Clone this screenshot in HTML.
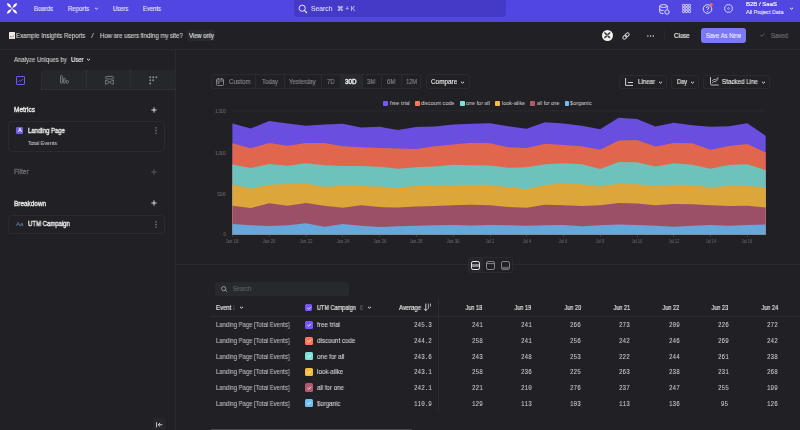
<!DOCTYPE html>
<html><head><meta charset="utf-8">
<style>
*{box-sizing:border-box;margin:0;padding:0}
html,body{width:800px;height:430px;overflow:hidden;background:#212125;font-family:"Liberation Sans",sans-serif}
.a{position:absolute;white-space:nowrap}
span.a{will-change:transform}
svg.a{overflow:visible}
</style></head><body>
<div class="a" style="left:0px;top:0px;width:800px;height:21.5px;background:#5146e1;"></div>
<svg class="a" style="left:6px;top:3px" width="12" height="11" viewBox="0 0 12 11"><g fill="#fff"><path d="M0.9,0.3 Q4.6,0.5 5.6,4.9 Q1.2,4.0 0.9,0.3 Z"/><path d="M11.1,0.3 Q7.4,0.5 6.4,4.9 Q10.8,4.0 11.1,0.3 Z"/><path d="M0.9,10.7 Q4.6,10.5 5.6,6.1 Q1.2,7.0 0.9,10.7 Z"/><path d="M11.1,10.7 Q7.4,10.5 6.4,6.1 Q10.8,7.0 11.1,10.7 Z"/><circle cx="6" cy="5.5" r="0.7"/></g></svg>
<span class="a" style="left:33.60px;top:4.86px;font-size:6.4px;line-height:7.68px;color:#e6e4ff;font-weight:normal;font-family:'Liberation Sans',sans-serif;transform:scale(0.943,1.000);transform-origin:left center;-webkit-text-stroke:0.12px #e6e4ff;">Boards</span>
<span class="a" style="left:67.60px;top:4.86px;font-size:6.4px;line-height:7.68px;color:#e6e4ff;font-weight:normal;font-family:'Liberation Sans',sans-serif;transform:scale(0.947,1.000);transform-origin:left center;-webkit-text-stroke:0.12px #e6e4ff;">Reports</span>
<span class="a" style="left:113.30px;top:4.86px;font-size:6.4px;line-height:7.68px;color:#e6e4ff;font-weight:normal;font-family:'Liberation Sans',sans-serif;transform:scale(0.916,1.000);transform-origin:left center;-webkit-text-stroke:0.12px #e6e4ff;">Users</span>
<span class="a" style="left:142.80px;top:4.86px;font-size:6.4px;line-height:7.68px;color:#e6e4ff;font-weight:normal;font-family:'Liberation Sans',sans-serif;transform:scale(0.926,1.000);transform-origin:left center;-webkit-text-stroke:0.12px #e6e4ff;">Events</span>
<svg class="a" style="left:94.3px;top:7.1px" width="5" height="3" viewBox="0 0 5 3"><path d="M1.0 0.8 L2.5 2.2 L4.0 0.8" stroke="#e6e4ff" stroke-width="1.0" fill="none"/></svg>
<div class="a" style="left:293.5px;top:0px;width:212px;height:17px;background:#4539c8;border-radius:0 0 4px 4px;"></div>
<svg class="a" style="left:297.5px;top:3.5px" width="10" height="10" viewBox="0 0 10 10"><circle cx="4.2" cy="4.2" r="3.1" stroke="#e6e4ff" stroke-width="1" fill="none"/><path d="M6.5 6.5 L9 9" stroke="#e6e4ff" stroke-width="1.1"/></svg>
<span class="a" style="left:311.00px;top:4.52px;font-size:6.8px;line-height:8.16px;color:#dcd9ff;font-weight:normal;font-family:'Liberation Sans',sans-serif;transform:scale(0.998,1.000);transform-origin:left center;-webkit-text-stroke:0.1px #dcd9ff;">Search</span>
<span class="a" style="left:337.00px;top:4.52px;font-size:6.8px;line-height:8.16px;color:#dcd9ff;font-weight:normal;font-family:'Liberation Sans',sans-serif;transform:scale(0.934,1.000);transform-origin:left center;-webkit-text-stroke:0.1px #dcd9ff;">&#8984; + K</span>
<svg class="a" style="left:659px;top:4px" width="11" height="11" viewBox="0 0 11 11"><ellipse cx="4.5" cy="2" rx="3.8" ry="1.4" stroke="#eeeaff" stroke-width="0.9" fill="none"/><path d="M0.7 2 V8 C0.7 9 2.4 9.5 4.5 9.5 M8.3 2 V5 M0.7 5 C0.7 6 2.4 6.5 4.5 6.5" stroke="#eeeaff" stroke-width="0.9" fill="none"/><circle cx="8" cy="8" r="2.2" stroke="#eeeaff" stroke-width="0.9" fill="none"/></svg>
<svg class="a" style="left:681.6px;top:4.4px" width="8.5" height="8.5" viewBox="0 0 8.5 8.5"><rect x="0.4" y="0.4" width="2.2" height="2.2" rx="0.6" fill="none" stroke="#eeeaff" stroke-width="0.75"/><rect x="0.4" y="3.4" width="2.2" height="2.2" rx="0.6" fill="none" stroke="#eeeaff" stroke-width="0.75"/><rect x="0.4" y="6.4" width="2.2" height="2.2" rx="0.6" fill="none" stroke="#eeeaff" stroke-width="0.75"/><rect x="3.4" y="0.4" width="2.2" height="2.2" rx="0.6" fill="none" stroke="#eeeaff" stroke-width="0.75"/><rect x="3.4" y="3.4" width="2.2" height="2.2" rx="0.6" fill="none" stroke="#eeeaff" stroke-width="0.75"/><rect x="3.4" y="6.4" width="2.2" height="2.2" rx="0.6" fill="none" stroke="#eeeaff" stroke-width="0.75"/><rect x="6.4" y="0.4" width="2.2" height="2.2" rx="0.6" fill="none" stroke="#eeeaff" stroke-width="0.75"/><rect x="6.4" y="3.4" width="2.2" height="2.2" rx="0.6" fill="none" stroke="#eeeaff" stroke-width="0.75"/><rect x="6.4" y="6.4" width="2.2" height="2.2" rx="0.6" fill="none" stroke="#eeeaff" stroke-width="0.75"/></svg>
<svg class="a" style="left:701.5px;top:2px" width="12" height="12" viewBox="0 0 12 12"><circle cx="5.5" cy="7" r="4.3" stroke="#eeeaff" stroke-width="0.9" fill="none"/><path d="M4.2 5.9 C4.2 4.2 6.9 4.2 6.9 5.9 C6.9 6.9 5.5 7 5.5 8" stroke="#eeeaff" stroke-width="0.9" fill="none"/><circle cx="5.5" cy="9.4" r="0.5" fill="#eeeaff"/><circle cx="9.2" cy="2.6" r="1.6" fill="#f06a4a"/></svg>
<svg class="a" style="left:724px;top:4.3px" width="9" height="9" viewBox="0 0 9 9"><path d="M4.50,0.80 Q6.38,-0.03 7.12,1.88 Q9.03,2.62 8.20,4.50 Q9.03,6.38 7.12,7.12 Q6.38,9.03 4.50,8.20 Q2.62,9.03 1.88,7.12 Q-0.03,6.38 0.80,4.50 Q-0.03,2.62 1.88,1.88 Q2.62,-0.03 4.50,0.80 Z" stroke="#eeeaff" stroke-width="0.85" fill="none" stroke-linejoin="round"/><circle cx="4.5" cy="4.5" r="0.9" stroke="#eeeaff" stroke-width="0.6" fill="none"/></svg>
<span class="a" style="left:746.00px;top:0.90px;font-size:6.0px;line-height:7.20px;color:#f2f0ff;font-weight:normal;font-family:'Liberation Sans',sans-serif;transform:scale(0.999,1.000);transform-origin:left center;-webkit-text-stroke:0.2px #f2f0ff;">B2B / SaaS</span>
<span class="a" style="left:746.00px;top:9.14px;font-size:5.6px;line-height:6.72px;color:#e6e4ff;font-weight:normal;font-family:'Liberation Sans',sans-serif;transform:scale(0.975,1.000);transform-origin:left center;-webkit-text-stroke:0.15px #e6e4ff;">All Project Data</span>
<svg class="a" style="left:788.8px;top:7.0px" width="5" height="3" viewBox="0 0 5 3"><path d="M1.0 0.8 L2.5 2.2 L4.0 0.8" stroke="#fff" stroke-width="1.0" fill="none"/></svg>
<div class="a" style="left:0px;top:49px;width:800px;height:0.8px;background:#2a2b2f;"></div>
<svg class="a" style="left:8.9px;top:31.7px" width="6" height="7" viewBox="0 0 6 7"><rect x="0" y="0" width="6" height="7" rx="0.5" fill="#ececec"/><path d="M0.8 4.8 L2.4 4.4 L3.6 4.7 L5.3 3.2" stroke="#c8703f" stroke-width="0.9" fill="none"/><path d="M0.7 6.2 H5.3" stroke="#a0a0a0" stroke-width="0.4"/></svg>
<span class="a" style="left:16.40px;top:31.72px;font-size:6.3px;line-height:7.56px;color:#d6d6d8;font-weight:normal;font-family:'Liberation Sans',sans-serif;transform:scale(0.966,1.000);transform-origin:left center;-webkit-text-stroke:0.1px #d6d6d8;">Example Insights Reports</span>
<span class="a" style="left:91.40px;top:31.72px;font-size:6.3px;line-height:7.56px;color:#b0b0b4;font-weight:normal;font-family:'Liberation Sans',sans-serif;transform:scale(1.657,1.000);transform-origin:left center;">/</span>
<span class="a" style="left:99.80px;top:31.72px;font-size:6.3px;line-height:7.56px;color:#d6d6d8;font-weight:normal;font-family:'Liberation Sans',sans-serif;transform:scale(0.962,1.000);transform-origin:left center;-webkit-text-stroke:0.1px #d6d6d8;">How are users finding my site?</span>
<div class="a" style="left:186.5px;top:30.3px;width:28.6px;height:10.6px;background:#28292d;border-radius:2px;"></div>
<span class="a" style="left:188.50px;top:31.72px;font-size:6.3px;line-height:7.56px;color:#e6e6e8;font-weight:normal;font-family:'Liberation Sans',sans-serif;transform:scale(0.931,1.000);transform-origin:left center;-webkit-text-stroke:0.1px #e6e6e8;">View only</span>
<div class="a" style="left:601.9px;top:29.8px;width:11.3px;height:11.3px;background:#f2f2f2;border-radius:6px;"></div>
<svg class="a" style="left:604.3px;top:32.1px" width="6.5" height="6.5" viewBox="0 0 12 11"><g fill="#2a2a2e" stroke="#2a2a2e" stroke-width="0.9" stroke-linejoin="round"><path d="M0.6,0.2 Q5,0.4 5.7,4.9 Q1,4.2 0.6,0.2 Z"/><path d="M11.4,0.2 Q7,0.4 6.3,4.9 Q11,4.2 11.4,0.2 Z"/><path d="M0.6,10.8 Q5,10.6 5.7,6.1 Q1,6.8 0.6,10.8 Z"/><path d="M11.4,10.8 Q7,10.6 6.3,6.1 Q11,6.8 11.4,10.8 Z"/></g></svg>
<svg class="a" style="left:621.5px;top:31.5px" width="8" height="8" viewBox="0 0 8 8"><g transform="rotate(-45 4 4)" stroke="#d8d8da" stroke-width="1" fill="none"><rect x="0.1" y="2.5" width="4.6" height="3" rx="1.5"/><rect x="3.3" y="2.5" width="4.6" height="3" rx="1.5"/></g></svg>
<svg class="a" style="left:646.5px;top:34.6px" width="7.5" height="2" viewBox="0 0 7.5 2"><circle cx="0.9" cy="1" r="0.65" fill="#f0f0f2"/><circle cx="3.6" cy="1" r="0.65" fill="#f0f0f2"/><circle cx="6.3" cy="1" r="0.65" fill="#f0f0f2"/></svg>
<div class="a" style="left:663.6px;top:30px;width:0.6px;height:10.5px;background:#28292d;"></div>
<span class="a" style="left:674.00px;top:31.60px;font-size:6.5px;line-height:7.80px;color:#ececee;font-weight:normal;font-family:'Liberation Sans',sans-serif;transform:scale(0.944,1.000);transform-origin:left center;-webkit-text-stroke:0.18px #ececee;">Close</span>
<div class="a" style="left:700.8px;top:28.1px;width:45.4px;height:14.5px;background:#7d78f6;border-radius:3px;"></div>
<span class="a" style="left:706.00px;top:31.66px;font-size:6.4px;line-height:7.68px;color:#eeeeff;font-weight:normal;font-family:'Liberation Sans',sans-serif;transform:scale(0.921,1.000);transform-origin:left center;-webkit-text-stroke:0.12px #eeeeff;">Save As New</span>
<svg class="a" style="left:760px;top:33.3px" width="5" height="4" viewBox="0 0 5 4"><path d="M0.5 2 L1.8 3.3 L4.5 0.6" stroke="#6f6f73" stroke-width="0.8" fill="none"/></svg>
<span class="a" style="left:771.00px;top:31.72px;font-size:6.3px;line-height:7.56px;color:#6c6c70;font-weight:normal;font-family:'Liberation Sans',sans-serif;transform:scale(0.952,1.000);transform-origin:left center;-webkit-text-stroke:0.2px #6c6c70;">Saved</span>
<div class="a" style="left:175.2px;top:50px;width:0.8px;height:380px;background:#2a2b2f;"></div>
<span class="a" style="left:14.25px;top:55.70px;font-size:6.5px;line-height:7.80px;color:#d0d0d2;font-weight:normal;font-family:'Liberation Sans',sans-serif;transform:scale(0.918,1.000);transform-origin:left center;-webkit-text-stroke:0.1px #d0d0d2;">Analyze Uniques by</span>
<span class="a" style="left:70.75px;top:55.70px;font-size:6.5px;line-height:7.80px;color:#efeff1;font-weight:normal;font-family:'Liberation Sans',sans-serif;transform:scale(0.910,1.000);transform-origin:left center;-webkit-text-stroke:0.15px #efeff1;">User</span>
<svg class="a" style="left:85.7px;top:58.3px" width="5" height="3" viewBox="0 0 5 3"><path d="M1.0 0.8 L2.5 2.2 L4.0 0.8" stroke="#e4e4e6" stroke-width="1.0" fill="none"/></svg>
<div class="a" style="left:41.25px;top:70px;width:134px;height:19.5px;background:#26272b;border-left:1px dotted #36373b;border-bottom:1px dotted #36373b;border-top-left-radius:3px;"></div>
<div class="a" style="left:86.25px;top:70px;width:1px;height:19.5px;border-left:1px dotted #36373b;"></div>
<div class="a" style="left:130px;top:70px;width:1px;height:19.5px;border-left:1px dotted #36373b;"></div>
<svg class="a" style="left:15.5px;top:75.5px" width="9" height="9" viewBox="0 0 9 9"><rect x="0.5" y="0.5" width="8" height="8" rx="0.6" stroke="#6f5ff0" stroke-width="1" fill="none"/><path d="M2 6 L3.6 4.4 L4.8 5.2 L7 3" stroke="#6f5ff0" stroke-width="0.8" fill="none"/></svg>
<svg class="a" style="left:59.8px;top:75.3px" width="9" height="9" viewBox="0 0 9 9"><g stroke="#8a8a8e" stroke-width="0.8" fill="none"><rect x="0.5" y="0.5" width="1.8" height="7.8" rx="0.9"/><rect x="3.4" y="3.2" width="1.8" height="5.1" rx="0.9"/><rect x="6.3" y="5.4" width="2.1" height="2.9" rx="1"/></g></svg>
<svg class="a" style="left:104.6px;top:75.5px" width="9" height="9" viewBox="0 0 9 9"><g stroke="#8a8a8e" stroke-width="0.8" fill="none"><rect x="0.5" y="0.4" width="8" height="2.6" rx="1.3"/><path d="M0.6 4.2 C3 4.2 6 8.3 8.4 8.3 M8.4 4.2 C6 4.2 3 8.3 0.6 8.3 M0.6 4.2 V8.3 M8.4 4.2 V8.3"/></g></svg>
<svg class="a" style="left:148.75px;top:75.5px" width="9" height="9" viewBox="0 0 9 9"><g fill="#8a8a8e"><circle cx="1.2" cy="1.2" r="1.0"/><circle cx="4.2" cy="1.2" r="1.0"/><circle cx="7.3" cy="1.2" r="1.0"/><circle cx="1.2" cy="4.3" r="1.0"/><circle cx="4.2" cy="4.3" r="1.0"/><circle cx="1.2" cy="7.4" r="1.0"/></g></svg>
<span class="a" style="left:14.00px;top:105.92px;font-size:6.3px;line-height:7.56px;color:#ececee;font-weight:normal;font-family:'Liberation Sans',sans-serif;transform:scale(1.035,1.000);transform-origin:left center;-webkit-text-stroke:0.3px #ececee;">Metrics</span>
<svg class="a" style="left:151px;top:106.7px" width="6" height="6" viewBox="0 0 6 6"><path d="M3 0.4 V5.6 M0.4 3 H5.6" stroke="#dcdcde" stroke-width="1"/></svg>
<div class="a" style="left:8.3px;top:120.7px;width:156.7px;height:31.5px;border:1px solid #2a2b2f;border-radius:4px;"></div>
<div class="a" style="left:16.2px;top:126.9px;width:7px;height:7px;background:#6c5ce9;border-radius:1px;"></div>
<span class="a" style="left:19.70px;top:127.26px;font-size:5.4px;line-height:6.48px;color:#fff;font-weight:bold;font-family:'Liberation Sans',sans-serif;transform:translateX(-50%);transform-origin:center center;">A</span>
<span class="a" style="left:28.00px;top:126.62px;font-size:6.3px;line-height:7.56px;color:#f0f0f2;font-weight:normal;font-family:'Liberation Sans',sans-serif;transform:scale(0.952,1.000);transform-origin:left center;-webkit-text-stroke:0.3px #f0f0f2;">Landing Page</span>
<svg class="a" style="left:154.7px;top:126.9px" width="2" height="7" viewBox="0 0 2 7"><g fill="#a0a0a4"><circle cx="1" cy="0.9" r="0.65"/><circle cx="1" cy="3.5" r="0.65"/><circle cx="1" cy="6.1" r="0.65"/></g></svg>
<span class="a" style="left:28.00px;top:139.70px;font-size:6.0px;line-height:7.20px;color:#c4c4c7;font-weight:normal;font-family:'Liberation Sans',sans-serif;transform:scale(0.887,1.000);transform-origin:left center;-webkit-text-stroke:0.08px #c4c4c7;">Total Events</span>
<span class="a" style="left:14.00px;top:167.92px;font-size:6.3px;line-height:7.56px;color:#6a6a6e;font-weight:normal;font-family:'Liberation Sans',sans-serif;transform:scale(1.057,1.000);transform-origin:left center;-webkit-text-stroke:0.3px #6a6a6e;">Filter</span>
<svg class="a" style="left:151px;top:168.7px" width="6" height="6" viewBox="0 0 6 6"><path d="M3 0.4 V5.6 M0.4 3 H5.6" stroke="#5a5a5e" stroke-width="1"/></svg>
<span class="a" style="left:14.00px;top:199.62px;font-size:6.3px;line-height:7.56px;color:#ececee;font-weight:normal;font-family:'Liberation Sans',sans-serif;transform:scale(1.019,1.000);transform-origin:left center;-webkit-text-stroke:0.3px #ececee;">Breakdown</span>
<svg class="a" style="left:151px;top:200.4px" width="6" height="6" viewBox="0 0 6 6"><path d="M3 0.4 V5.6 M0.4 3 H5.6" stroke="#dcdcde" stroke-width="1"/></svg>
<div class="a" style="left:8.3px;top:215.1px;width:156.7px;height:18.5px;border:1px solid #2a2b2f;border-radius:4px;"></div>
<span class="a" style="left:15.75px;top:220.62px;font-size:5.8px;line-height:6.96px;color:#6a8cb2;font-weight:normal;font-family:'Liberation Sans',sans-serif;transform:scale(1.050,1.000);transform-origin:left center;">Aa</span>
<span class="a" style="left:27.90px;top:220.32px;font-size:6.3px;line-height:7.56px;color:#f0f0f2;font-weight:normal;font-family:'Liberation Sans',sans-serif;transform:scale(0.949,1.000);transform-origin:left center;-webkit-text-stroke:0.3px #f0f0f2;">UTM Campaign</span>
<svg class="a" style="left:154.7px;top:220.6px" width="2" height="7" viewBox="0 0 2 7"><g fill="#a0a0a4"><circle cx="1" cy="0.9" r="0.65"/><circle cx="1" cy="3.5" r="0.65"/><circle cx="1" cy="6.1" r="0.65"/></g></svg>
<div class="a" style="left:153px;top:417.5px;width:12.6px;height:13px;background:#26272b;border-radius:3px;"></div>
<svg class="a" style="left:155.6px;top:422px" width="6.5" height="5.5" viewBox="0 0 6.5 5.5"><path d="M0.6 0.2 V5.3 M6.3 2.75 H2.2 M4.1 0.9 L2.2 2.75 L4.1 4.6" stroke="#dcdcde" stroke-width="0.9" fill="none"/></svg>
<div class="a" style="left:211px;top:74px;width:210px;height:15.2px;border:1px solid #2a2b2f;border-radius:3px;"></div>
<div class="a" style="left:255.3px;top:75px;width:0.8px;height:13.2px;background:#2a2b2f;"></div>
<div class="a" style="left:284.2px;top:75px;width:0.8px;height:13.2px;background:#2a2b2f;"></div>
<div class="a" style="left:320.5px;top:75px;width:0.8px;height:13.2px;background:#2a2b2f;"></div>
<div class="a" style="left:339.8px;top:75px;width:0.8px;height:13.2px;background:#2a2b2f;"></div>
<div class="a" style="left:361.8px;top:75px;width:0.8px;height:13.2px;background:#2a2b2f;"></div>
<div class="a" style="left:381px;top:75px;width:0.8px;height:13.2px;background:#2a2b2f;"></div>
<div class="a" style="left:401px;top:75px;width:0.8px;height:13.2px;background:#2a2b2f;"></div>
<div class="a" style="left:340.3px;top:75px;width:21.5px;height:13.2px;background:#28292d;"></div>
<svg class="a" style="left:215.5px;top:77.5px" width="8" height="8" viewBox="0 0 8 8"><rect x="0.5" y="1" width="7" height="6.5" rx="1" stroke="#9a9a9e" stroke-width="0.8" fill="none"/><path d="M0.5 3 H7.5 M2.3 0 V1.8 M5.7 0 V1.8" stroke="#9a9a9e" stroke-width="0.8"/><rect x="1.8" y="4.3" width="1.5" height="1.5" fill="#9a9a9e"/></svg>
<span class="a" style="left:229.00px;top:77.82px;font-size:6.3px;line-height:7.56px;color:#8a8a8e;font-weight:normal;font-family:'Liberation Sans',sans-serif;transform:scale(0.986,1.000);transform-origin:left center;-webkit-text-stroke:0.1px #8a8a8e;">Custom</span>
<span class="a" style="left:262.00px;top:77.82px;font-size:6.3px;line-height:7.56px;color:#8a8a8e;font-weight:normal;font-family:'Liberation Sans',sans-serif;transform:scale(0.946,1.000);transform-origin:left center;-webkit-text-stroke:0.1px #8a8a8e;">Today</span>
<span class="a" style="left:288.90px;top:77.82px;font-size:6.3px;line-height:7.56px;color:#8a8a8e;font-weight:normal;font-family:'Liberation Sans',sans-serif;transform:scale(0.968,1.000);transform-origin:left center;-webkit-text-stroke:0.1px #8a8a8e;">Yesterday</span>
<span class="a" style="left:326.80px;top:77.82px;font-size:6.3px;line-height:7.56px;color:#8a8a8e;font-weight:normal;font-family:'Liberation Sans',sans-serif;transform:scale(0.930,1.000);transform-origin:left center;-webkit-text-stroke:0.1px #8a8a8e;">7D</span>
<span class="a" style="left:344.70px;top:77.82px;font-size:6.3px;line-height:7.56px;color:#f2f2f4;font-weight:normal;font-family:'Liberation Sans',sans-serif;transform:scale(1.003,1.000);transform-origin:left center;-webkit-text-stroke:0.35px #f2f2f4;">30D</span>
<span class="a" style="left:367.30px;top:77.82px;font-size:6.3px;line-height:7.56px;color:#8a8a8e;font-weight:normal;font-family:'Liberation Sans',sans-serif;transform:scale(0.937,1.000);transform-origin:left center;-webkit-text-stroke:0.1px #8a8a8e;">3M</span>
<span class="a" style="left:386.50px;top:77.82px;font-size:6.3px;line-height:7.56px;color:#8a8a8e;font-weight:normal;font-family:'Liberation Sans',sans-serif;transform:scale(0.949,1.000);transform-origin:left center;-webkit-text-stroke:0.1px #8a8a8e;">6M</span>
<span class="a" style="left:405.80px;top:77.82px;font-size:6.3px;line-height:7.56px;color:#8a8a8e;font-weight:normal;font-family:'Liberation Sans',sans-serif;transform:scale(0.898,1.000);transform-origin:left center;-webkit-text-stroke:0.1px #8a8a8e;">12M</span>
<div class="a" style="left:425.5px;top:74px;width:44px;height:15.2px;border:1px solid #2a2b2f;border-radius:3px;"></div>
<span class="a" style="left:430.70px;top:77.82px;font-size:6.3px;line-height:7.56px;color:#efeff1;font-weight:normal;font-family:'Liberation Sans',sans-serif;transform:scale(1.015,1.000);transform-origin:left center;-webkit-text-stroke:0.1px #efeff1;">Compare</span>
<svg class="a" style="left:460px;top:80.5px" width="5" height="3" viewBox="0 0 5 3"><path d="M1.0 0.8 L2.5 2.2 L4.0 0.8" stroke="#e4e4e6" stroke-width="1.0" fill="none"/></svg>
<div class="a" style="left:619px;top:74.75px;width:48.4px;height:14px;border:1px solid #2a2b2f;border-radius:3px;"></div>
<svg class="a" style="left:624.5px;top:77.5px" width="8" height="8" viewBox="0 0 8 8"><path d="M0.6 0 V7.4 H8 M2.8 4.5 H8" stroke="#e4e4e6" stroke-width="0.9" fill="none"/></svg>
<span class="a" style="left:637.70px;top:77.82px;font-size:6.3px;line-height:7.56px;color:#efeff1;font-weight:normal;font-family:'Liberation Sans',sans-serif;transform:scale(0.965,1.000);transform-origin:left center;-webkit-text-stroke:0.1px #efeff1;">Linear</span>
<svg class="a" style="left:658px;top:80.5px" width="5" height="3" viewBox="0 0 5 3"><path d="M1.0 0.8 L2.5 2.2 L4.0 0.8" stroke="#e4e4e6" stroke-width="1.0" fill="none"/></svg>
<div class="a" style="left:671.4px;top:74.75px;width:27.5px;height:14px;border:1px solid #2a2b2f;border-radius:3px;"></div>
<span class="a" style="left:676.80px;top:77.82px;font-size:6.3px;line-height:7.56px;color:#efeff1;font-weight:normal;font-family:'Liberation Sans',sans-serif;transform:scale(0.910,1.000);transform-origin:left center;-webkit-text-stroke:0.1px #efeff1;">Day</span>
<svg class="a" style="left:689.8px;top:80.5px" width="5" height="3" viewBox="0 0 5 3"><path d="M1.0 0.8 L2.5 2.2 L4.0 0.8" stroke="#e4e4e6" stroke-width="1.0" fill="none"/></svg>
<div class="a" style="left:703.4px;top:74.75px;width:66.4px;height:14px;border:1px solid #2a2b2f;border-radius:3px;"></div>
<svg class="a" style="left:709.5px;top:77.4px" width="9" height="8.5" viewBox="0 0 9 8.5"><path d="M0.5 0 V6.8 Q0.5 8 1.7 8 H8.8" stroke="#d8d8da" stroke-width="0.85" fill="none"/><path d="M2.2 6 L4 4.2 L5.2 5 L8.4 2 M2.2 4 L4 2.2 L5.2 3 L8.4 0.4" stroke="#d8d8da" stroke-width="0.75" fill="none"/></svg>
<span class="a" style="left:722.00px;top:77.82px;font-size:6.3px;line-height:7.56px;color:#efeff1;font-weight:normal;font-family:'Liberation Sans',sans-serif;transform:scale(0.983,1.000);transform-origin:left center;-webkit-text-stroke:0.1px #efeff1;">Stacked Line</span>
<svg class="a" style="left:760.5px;top:80.5px" width="5" height="3" viewBox="0 0 5 3"><path d="M1.0 0.8 L2.5 2.2 L4.0 0.8" stroke="#e4e4e6" stroke-width="1.0" fill="none"/></svg>
<div class="a" style="left:383.4px;top:101px;width:4.5px;height:4.5px;background:#7856ff;border-radius:0.9px;"></div>
<span class="a" style="left:389.60px;top:99.76px;font-size:5.9px;line-height:7.08px;color:#c0c0c4;font-weight:normal;font-family:'Liberation Sans',sans-serif;transform:scale(0.926,1.000);transform-origin:left center;-webkit-text-stroke:0.05px #c0c0c4;">free trial</span>
<div class="a" style="left:415px;top:101px;width:4.5px;height:4.5px;background:#ff7557;border-radius:0.9px;"></div>
<span class="a" style="left:420.80px;top:99.76px;font-size:5.9px;line-height:7.08px;color:#c0c0c4;font-weight:normal;font-family:'Liberation Sans',sans-serif;transform:scale(0.921,1.000);transform-origin:left center;-webkit-text-stroke:0.05px #c0c0c4;">discount code</span>
<div class="a" style="left:460px;top:101px;width:4.5px;height:4.5px;background:#80e1d9;border-radius:0.9px;"></div>
<span class="a" style="left:466.40px;top:99.76px;font-size:5.9px;line-height:7.08px;color:#c0c0c4;font-weight:normal;font-family:'Liberation Sans',sans-serif;transform:scale(0.924,1.000);transform-origin:left center;-webkit-text-stroke:0.05px #c0c0c4;">one for all</span>
<div class="a" style="left:495.4px;top:101px;width:4.5px;height:4.5px;background:#f8bc3b;border-radius:0.9px;"></div>
<span class="a" style="left:501.50px;top:99.76px;font-size:5.9px;line-height:7.08px;color:#c0c0c4;font-weight:normal;font-family:'Liberation Sans',sans-serif;transform:scale(0.928,1.000);transform-origin:left center;-webkit-text-stroke:0.05px #c0c0c4;">look-alike</span>
<div class="a" style="left:530.2px;top:101px;width:4.5px;height:4.5px;background:#b2596e;border-radius:0.9px;"></div>
<span class="a" style="left:536.70px;top:99.76px;font-size:5.9px;line-height:7.08px;color:#c0c0c4;font-weight:normal;font-family:'Liberation Sans',sans-serif;transform:scale(0.870,1.000);transform-origin:left center;-webkit-text-stroke:0.05px #c0c0c4;">all for one</span>
<div class="a" style="left:564.8px;top:101px;width:4.5px;height:4.5px;background:#72bef4;border-radius:0.9px;"></div>
<span class="a" style="left:570.40px;top:99.76px;font-size:5.9px;line-height:7.08px;color:#c0c0c4;font-weight:normal;font-family:'Liberation Sans',sans-serif;transform:scale(0.960,1.000);transform-origin:left center;-webkit-text-stroke:0.05px #c0c0c4;">$organic</span>
<svg class="a" style="left:0;top:0" width="800" height="430" viewBox="0 0 800 430">
<path d="M232.4 110.9 H765.7" stroke="#2e2f33" stroke-width="0.6"/>
<polygon fill="#6a4edf" points="232.4,123.4 250.8,128.4 269.2,121.0 287.6,123.4 306.0,125.8 324.3,124.4 342.7,123.8 361.1,127.4 379.5,126.7 397.9,130.0 416.3,127.0 434.7,126.5 453.1,124.4 471.5,123.7 489.9,123.3 508.2,126.2 526.6,128.8 545.0,122.3 563.4,123.5 581.8,125.8 600.2,129.3 618.6,117.8 637.0,118.9 655.4,126.5 673.8,122.7 692.1,125.3 710.5,126.7 728.9,126.2 747.3,123.2 765.7,135.8 765.7,234.5 232.4,234.5"/>
<polygon fill="#e0674e" points="232.4,143.2 250.8,148.2 269.2,142.9 287.6,145.8 306.0,143.0 324.3,143.0 342.7,146.2 361.1,147.2 379.5,148.0 397.9,148.6 416.3,148.9 434.7,146.3 453.1,144.5 471.5,142.8 489.9,143.3 508.2,147.2 526.6,148.0 545.0,143.7 563.4,145.1 581.8,146.3 600.2,149.8 618.6,140.5 637.0,139.9 655.4,146.6 673.8,143.1 692.1,143.3 710.5,149.8 728.9,145.9 747.3,144.0 765.7,152.4 765.7,234.5 232.4,234.5"/>
<polygon fill="#6ec2bc" points="232.4,164.4 250.8,168.1 269.2,163.9 287.6,165.8 306.0,163.3 324.3,165.2 342.7,166.1 361.1,166.1 379.5,166.8 397.9,168.7 416.3,167.3 434.7,166.4 453.1,164.7 471.5,165.2 489.9,165.4 508.2,167.8 526.6,167.3 545.0,164.3 563.4,163.2 581.8,164.3 600.2,169.0 618.6,162.0 637.0,162.2 655.4,166.4 673.8,163.2 692.1,164.7 710.5,168.7 728.9,165.0 747.3,164.3 765.7,170.2 765.7,234.5 232.4,234.5"/>
<polygon fill="#dca63b" points="232.4,184.4 250.8,188.5 269.2,184.8 287.6,184.0 306.0,183.4 324.3,186.7 342.7,185.7 361.1,186.1 379.5,186.4 397.9,187.6 416.3,186.1 434.7,185.5 453.1,185.0 471.5,184.7 489.9,184.8 508.2,187.3 526.6,189.0 545.0,185.0 563.4,183.2 581.8,184.3 600.2,186.4 618.6,183.8 637.0,184.3 655.4,186.1 673.8,184.7 692.1,185.0 710.5,187.3 728.9,185.5 747.3,185.5 765.7,187.8 765.7,234.5 232.4,234.5"/>
<polygon fill="#9b5068" points="232.4,205.7 250.8,207.9 269.2,203.3 287.6,205.7 306.0,203.0 324.3,205.7 342.7,207.7 361.1,205.3 379.5,207.1 397.9,207.4 416.3,206.5 434.7,206.0 453.1,205.3 471.5,204.8 489.9,205.3 508.2,207.1 526.6,207.8 545.0,204.8 563.4,205.3 581.8,206.0 600.2,205.3 618.6,203.0 637.0,203.6 655.4,205.3 673.8,203.9 692.1,204.2 710.5,205.3 728.9,206.0 747.3,205.7 765.7,207.4 765.7,234.5 232.4,234.5"/>
<polygon fill="#68a7d9" points="232.4,223.9 250.8,225.2 269.2,226.0 287.6,225.2 306.0,223.3 324.3,226.7 342.7,224.1 361.1,225.8 379.5,227.0 397.9,226.3 416.3,225.8 434.7,225.2 453.1,224.9 471.5,225.4 489.9,224.9 508.2,225.2 526.6,225.8 545.0,225.2 563.4,224.9 581.8,226.3 600.2,225.2 618.6,224.6 637.0,224.9 655.4,225.8 673.8,226.7 692.1,225.8 710.5,224.9 728.9,225.8 747.3,224.9 765.7,224.6 765.7,234.5 232.4,234.5"/>

</svg>
<span class="a" style="right:574.60px;top:108.44px;font-size:5.1px;line-height:6.12px;color:#6a6a6e;font-weight:normal;font-family:'Liberation Sans',sans-serif;transform:scale(0.831,1.000);transform-origin:right center;-webkit-text-stroke:0.05px #6a6a6e;">1,500</span>
<span class="a" style="right:574.60px;top:149.54px;font-size:5.1px;line-height:6.12px;color:#6a6a6e;font-weight:normal;font-family:'Liberation Sans',sans-serif;transform:scale(0.831,1.000);transform-origin:right center;-webkit-text-stroke:0.05px #6a6a6e;">1,000</span>
<span class="a" style="right:574.60px;top:190.74px;font-size:5.1px;line-height:6.12px;color:#6a6a6e;font-weight:normal;font-family:'Liberation Sans',sans-serif;transform:scale(0.965,1.000);transform-origin:right center;-webkit-text-stroke:0.05px #6a6a6e;">500</span>
<span class="a" style="right:574.60px;top:230.94px;font-size:5.1px;line-height:6.12px;color:#6a6a6e;font-weight:normal;font-family:'Liberation Sans',sans-serif;transform:scale(0.844,1.000);transform-origin:right center;-webkit-text-stroke:0.05px #6a6a6e;">0</span>
<span class="a" style="left:232.40px;top:238.22px;font-size:5.3px;line-height:6.36px;color:#6a6a6e;font-weight:normal;font-family:'Liberation Sans',sans-serif;transform:translateX(-50%) scale(0.786,1.000);transform-origin:center center;-webkit-text-stroke:0.05px #6a6a6e;">Jun 18</span>
<div class="a" style="left:232.1px;top:235px;width:0.6px;height:1.8px;background:#3a3b3f;"></div>
<span class="a" style="left:269.18px;top:238.22px;font-size:5.3px;line-height:6.36px;color:#6a6a6e;font-weight:normal;font-family:'Liberation Sans',sans-serif;transform:translateX(-50%) scale(0.786,1.000);transform-origin:center center;-webkit-text-stroke:0.05px #6a6a6e;">Jun 20</span>
<div class="a" style="left:268.8793103448276px;top:235px;width:0.6px;height:1.8px;background:#3a3b3f;"></div>
<span class="a" style="left:305.96px;top:238.22px;font-size:5.3px;line-height:6.36px;color:#6a6a6e;font-weight:normal;font-family:'Liberation Sans',sans-serif;transform:translateX(-50%) scale(0.786,1.000);transform-origin:center center;-webkit-text-stroke:0.05px #6a6a6e;">Jun 22</span>
<div class="a" style="left:305.65862068965515px;top:235px;width:0.6px;height:1.8px;background:#3a3b3f;"></div>
<span class="a" style="left:342.74px;top:238.22px;font-size:5.3px;line-height:6.36px;color:#6a6a6e;font-weight:normal;font-family:'Liberation Sans',sans-serif;transform:translateX(-50%) scale(0.786,1.000);transform-origin:center center;-webkit-text-stroke:0.05px #6a6a6e;">Jun 24</span>
<div class="a" style="left:342.4379310344828px;top:235px;width:0.6px;height:1.8px;background:#3a3b3f;"></div>
<span class="a" style="left:379.52px;top:238.22px;font-size:5.3px;line-height:6.36px;color:#6a6a6e;font-weight:normal;font-family:'Liberation Sans',sans-serif;transform:translateX(-50%) scale(0.786,1.000);transform-origin:center center;-webkit-text-stroke:0.05px #6a6a6e;">Jun 26</span>
<div class="a" style="left:379.21724137931034px;top:235px;width:0.6px;height:1.8px;background:#3a3b3f;"></div>
<span class="a" style="left:416.30px;top:238.22px;font-size:5.3px;line-height:6.36px;color:#6a6a6e;font-weight:normal;font-family:'Liberation Sans',sans-serif;transform:translateX(-50%) scale(0.786,1.000);transform-origin:center center;-webkit-text-stroke:0.05px #6a6a6e;">Jun 28</span>
<div class="a" style="left:415.996551724138px;top:235px;width:0.6px;height:1.8px;background:#3a3b3f;"></div>
<span class="a" style="left:453.08px;top:238.22px;font-size:5.3px;line-height:6.36px;color:#6a6a6e;font-weight:normal;font-family:'Liberation Sans',sans-serif;transform:translateX(-50%) scale(0.786,1.000);transform-origin:center center;-webkit-text-stroke:0.05px #6a6a6e;">Jun 30</span>
<div class="a" style="left:452.7758620689655px;top:235px;width:0.6px;height:1.8px;background:#3a3b3f;"></div>
<span class="a" style="left:489.86px;top:238.22px;font-size:5.3px;line-height:6.36px;color:#6a6a6e;font-weight:normal;font-family:'Liberation Sans',sans-serif;transform:translateX(-50%) scale(0.759,1.000);transform-origin:center center;-webkit-text-stroke:0.05px #6a6a6e;">Jul 2</span>
<div class="a" style="left:489.5551724137932px;top:235px;width:0.6px;height:1.8px;background:#3a3b3f;"></div>
<span class="a" style="left:526.63px;top:238.22px;font-size:5.3px;line-height:6.36px;color:#6a6a6e;font-weight:normal;font-family:'Liberation Sans',sans-serif;transform:translateX(-50%) scale(0.759,1.000);transform-origin:center center;-webkit-text-stroke:0.05px #6a6a6e;">Jul 4</span>
<div class="a" style="left:526.3344827586208px;top:235px;width:0.6px;height:1.8px;background:#3a3b3f;"></div>
<span class="a" style="left:563.41px;top:238.22px;font-size:5.3px;line-height:6.36px;color:#6a6a6e;font-weight:normal;font-family:'Liberation Sans',sans-serif;transform:translateX(-50%) scale(0.759,1.000);transform-origin:center center;-webkit-text-stroke:0.05px #6a6a6e;">Jul 6</span>
<div class="a" style="left:563.1137931034484px;top:235px;width:0.6px;height:1.8px;background:#3a3b3f;"></div>
<span class="a" style="left:600.19px;top:238.22px;font-size:5.3px;line-height:6.36px;color:#6a6a6e;font-weight:normal;font-family:'Liberation Sans',sans-serif;transform:translateX(-50%) scale(0.759,1.000);transform-origin:center center;-webkit-text-stroke:0.05px #6a6a6e;">Jul 8</span>
<div class="a" style="left:599.893103448276px;top:235px;width:0.6px;height:1.8px;background:#3a3b3f;"></div>
<span class="a" style="left:636.97px;top:238.22px;font-size:5.3px;line-height:6.36px;color:#6a6a6e;font-weight:normal;font-family:'Liberation Sans',sans-serif;transform:translateX(-50%) scale(0.743,1.000);transform-origin:center center;-webkit-text-stroke:0.05px #6a6a6e;">Jul 10</span>
<div class="a" style="left:636.6724137931036px;top:235px;width:0.6px;height:1.8px;background:#3a3b3f;"></div>
<span class="a" style="left:673.75px;top:238.22px;font-size:5.3px;line-height:6.36px;color:#6a6a6e;font-weight:normal;font-family:'Liberation Sans',sans-serif;transform:translateX(-50%) scale(0.743,1.000);transform-origin:center center;-webkit-text-stroke:0.05px #6a6a6e;">Jul 12</span>
<div class="a" style="left:673.4517241379311px;top:235px;width:0.6px;height:1.8px;background:#3a3b3f;"></div>
<span class="a" style="left:710.53px;top:238.22px;font-size:5.3px;line-height:6.36px;color:#6a6a6e;font-weight:normal;font-family:'Liberation Sans',sans-serif;transform:translateX(-50%) scale(0.743,1.000);transform-origin:center center;-webkit-text-stroke:0.05px #6a6a6e;">Jul 14</span>
<div class="a" style="left:710.2310344827588px;top:235px;width:0.6px;height:1.8px;background:#3a3b3f;"></div>
<span class="a" style="left:747.31px;top:238.22px;font-size:5.3px;line-height:6.36px;color:#6a6a6e;font-weight:normal;font-family:'Liberation Sans',sans-serif;transform:translateX(-50%) scale(0.743,1.000);transform-origin:center center;-webkit-text-stroke:0.05px #6a6a6e;">Jul 16</span>
<div class="a" style="left:747.0103448275863px;top:235px;width:0.6px;height:1.8px;background:#3a3b3f;"></div>
<div class="a" style="left:176px;top:264.4px;width:292px;height:0.6px;background:#2a2b2f;"></div>
<div class="a" style="left:512.5px;top:264.4px;width:288px;height:0.6px;background:#2a2b2f;"></div>
<div class="a" style="left:468px;top:257.25px;width:44.5px;height:15.4px;border:1px solid #2a2b2f;border-radius:3px;"></div>
<div class="a" style="left:468.5px;top:257.75px;width:14.5px;height:14.4px;background:#27282c;border-radius:2.5px 0 0 2.5px;"></div>
<svg class="a" style="left:470.9px;top:261px" width="9" height="9" viewBox="0 0 9 9"><rect x="0.5" y="0.5" width="8" height="8" rx="1.6" stroke="#e8e8ea" stroke-width="1" fill="none"/><path d="M0.5 3.9 H8.5 M0.5 5.1 H8.5" stroke="#e8e8ea" stroke-width="0.8"/></svg>
<svg class="a" style="left:485.9px;top:261px" width="9" height="9" viewBox="0 0 9 9"><rect x="0.5" y="0.5" width="8" height="8" rx="1.5" stroke="#909094" stroke-width="0.9" fill="none"/><path d="M0.5 2.6 H8.5" stroke="#909094" stroke-width="0.9"/></svg>
<svg class="a" style="left:500.5px;top:261px" width="9" height="9" viewBox="0 0 9 9"><rect x="0.5" y="0.5" width="8" height="8" rx="1.6" stroke="#909094" stroke-width="0.9" fill="none"/><rect x="0.5" y="5.8" width="8" height="2.7" fill="#606064"/></svg>
<div class="a" style="left:215.4px;top:281.8px;width:133.8px;height:14.4px;background:#28292d;border-radius:3px;"></div>
<svg class="a" style="left:220.6px;top:286.2px" width="7" height="6" viewBox="0 0 7 6"><circle cx="2.7" cy="2.6" r="2.1" stroke="#a0a0a4" stroke-width="0.9" fill="none"/><path d="M4.3 4.2 L6.2 5.8" stroke="#a0a0a4" stroke-width="0.9"/></svg>
<span class="a" style="left:232.80px;top:285.20px;font-size:6.5px;line-height:7.80px;color:#68686c;font-weight:normal;font-family:'Liberation Sans',sans-serif;transform:scale(0.893,1.000);transform-origin:left center;-webkit-text-stroke:0.05px #68686c;">Search</span>
<div class="a" style="left:210px;top:316px;width:590px;height:0.7px;background:#2c2d31;"></div>
<div class="a" style="left:437.5px;top:298px;width:0.7px;height:112px;background:#2c2d31;"></div>
<span class="a" style="left:215.60px;top:303.66px;font-size:6.4px;line-height:7.68px;color:#e8e8ea;font-weight:normal;font-family:'Liberation Sans',sans-serif;transform:scale(0.942,1.000);transform-origin:left center;-webkit-text-stroke:0.15px #e8e8ea;">Event</span>
<span class="a" style="left:232.80px;top:303.66px;font-size:6.4px;line-height:7.68px;color:#707074;font-weight:normal;font-family:'Liberation Sans',sans-serif;transform:scale(0.561,1.000);transform-origin:left center;">1</span>
<svg class="a" style="left:238.8px;top:306.2px" width="5" height="3" viewBox="0 0 5 3"><path d="M1.0 0.8 L2.5 2.2 L4.0 0.8" stroke="#e4e4e6" stroke-width="1.0" fill="none"/></svg>
<div class="a" style="left:304.7px;top:303.6px;width:7.8px;height:7.8px;background:#7856ff;border-radius:1.5px;"></div><svg class="a" style="left:306.50px;top:305.6px" width="4.5" height="4" viewBox="0 0 4.5 4"><path d="M0.4 2 L1.7 3.2 L4.1 0.7" stroke="#fff" stroke-width="0.8" fill="none"/></svg>
<span class="a" style="left:316.60px;top:303.66px;font-size:6.4px;line-height:7.68px;color:#e8e8ea;font-weight:normal;font-family:'Liberation Sans',sans-serif;transform:scale(0.865,1.000);transform-origin:left center;-webkit-text-stroke:0.15px #e8e8ea;">UTM Campaign</span>
<span class="a" style="left:360.00px;top:303.66px;font-size:6.4px;line-height:7.68px;color:#707074;font-weight:normal;font-family:'Liberation Sans',sans-serif;transform:scale(0.842,1.000);transform-origin:left center;">6</span>
<svg class="a" style="left:367.2px;top:306.2px" width="5" height="3" viewBox="0 0 5 3"><path d="M1.0 0.8 L2.5 2.2 L4.0 0.8" stroke="#e4e4e6" stroke-width="1.0" fill="none"/></svg>
<span class="a" style="left:399.00px;top:303.66px;font-size:6.4px;line-height:7.68px;color:#e8e8ea;font-weight:normal;font-family:'Liberation Sans',sans-serif;transform:scale(0.929,1.000);transform-origin:left center;-webkit-text-stroke:0.15px #e8e8ea;">Average</span>
<svg class="a" style="left:424px;top:302.5px" width="8" height="9" viewBox="0 0 8 9"><path d="M1.8 1 V7.2 M3.3 6 L1.8 7.6 L0.3 6" stroke="#e0e0e2" stroke-width="0.9" fill="none" stroke-linecap="round"/><path d="M4.4 1 V5.3 M6.5 1 V3.2" stroke="#b8b8bc" stroke-width="0.9" stroke-linecap="round"/></svg>
<span class="a" style="right:317.70px;top:303.66px;font-size:6.4px;line-height:7.68px;color:#e8e8ea;font-weight:normal;font-family:'Liberation Sans',sans-serif;transform:scale(0.870,1.000);transform-origin:right center;-webkit-text-stroke:0.15px #e8e8ea;">Jun 18</span>
<span class="a" style="right:268.45px;top:303.66px;font-size:6.4px;line-height:7.68px;color:#e8e8ea;font-weight:normal;font-family:'Liberation Sans',sans-serif;transform:scale(0.870,1.000);transform-origin:right center;-webkit-text-stroke:0.15px #e8e8ea;">Jun 19</span>
<span class="a" style="right:219.20px;top:303.66px;font-size:6.4px;line-height:7.68px;color:#e8e8ea;font-weight:normal;font-family:'Liberation Sans',sans-serif;transform:scale(0.870,1.000);transform-origin:right center;-webkit-text-stroke:0.15px #e8e8ea;">Jun 20</span>
<span class="a" style="right:169.95px;top:303.66px;font-size:6.4px;line-height:7.68px;color:#e8e8ea;font-weight:normal;font-family:'Liberation Sans',sans-serif;transform:scale(0.870,1.000);transform-origin:right center;-webkit-text-stroke:0.15px #e8e8ea;">Jun 21</span>
<span class="a" style="right:120.70px;top:303.66px;font-size:6.4px;line-height:7.68px;color:#e8e8ea;font-weight:normal;font-family:'Liberation Sans',sans-serif;transform:scale(0.870,1.000);transform-origin:right center;-webkit-text-stroke:0.15px #e8e8ea;">Jun 22</span>
<span class="a" style="right:71.45px;top:303.66px;font-size:6.4px;line-height:7.68px;color:#e8e8ea;font-weight:normal;font-family:'Liberation Sans',sans-serif;transform:scale(0.870,1.000);transform-origin:right center;-webkit-text-stroke:0.15px #e8e8ea;">Jun 23</span>
<span class="a" style="right:22.20px;top:303.66px;font-size:6.4px;line-height:7.68px;color:#e8e8ea;font-weight:normal;font-family:'Liberation Sans',sans-serif;transform:scale(0.870,1.000);transform-origin:right center;-webkit-text-stroke:0.15px #e8e8ea;">Jun 24</span>
<span class="a" style="left:215.60px;top:321.40px;font-size:6.5px;line-height:7.80px;color:#c4c4c8;font-weight:normal;font-family:'Liberation Sans',sans-serif;transform:scale(0.907,1.000);transform-origin:left center;-webkit-text-stroke:0.05px #c4c4c8;">Landing Page [Total Events]</span>
<div class="a" style="left:304.8px;top:320.9px;width:8.2px;height:8.2px;background:#7856ff;border-radius:1.5px;"></div><svg class="a" style="left:306.80px;top:323.1px" width="4.5" height="4" viewBox="0 0 4.5 4"><path d="M0.4 2 L1.7 3.2 L4.1 0.7" stroke="#fff" stroke-width="0.8" fill="none"/></svg>
<span class="a" style="left:316.80px;top:321.40px;font-size:6.5px;line-height:7.80px;color:#d4d4d8;font-weight:normal;font-family:'Liberation Sans',sans-serif;transform:scale(0.979,1.000);transform-origin:left center;-webkit-text-stroke:0.1px #d4d4d8;">free trial</span>
<span class="a" style="right:367.80px;top:322.33px;font-size:5.95px;line-height:7.14px;color:#cacace;font-weight:normal;font-family:'Liberation Mono',monospace;transform:scale(1.000,1.150);transform-origin:right center;-webkit-text-stroke:0.05px #cacace;">245.3</span>
<span class="a" style="right:317.70px;top:322.33px;font-size:5.95px;line-height:7.14px;color:#cacace;font-weight:normal;font-family:'Liberation Mono',monospace;transform:scale(1.000,1.150);transform-origin:right center;-webkit-text-stroke:0.05px #cacace;">241</span>
<span class="a" style="right:268.45px;top:322.33px;font-size:5.95px;line-height:7.14px;color:#cacace;font-weight:normal;font-family:'Liberation Mono',monospace;transform:scale(1.000,1.150);transform-origin:right center;-webkit-text-stroke:0.05px #cacace;">241</span>
<span class="a" style="right:219.20px;top:322.33px;font-size:5.95px;line-height:7.14px;color:#cacace;font-weight:normal;font-family:'Liberation Mono',monospace;transform:scale(1.000,1.150);transform-origin:right center;-webkit-text-stroke:0.05px #cacace;">266</span>
<span class="a" style="right:169.95px;top:322.33px;font-size:5.95px;line-height:7.14px;color:#cacace;font-weight:normal;font-family:'Liberation Mono',monospace;transform:scale(1.000,1.150);transform-origin:right center;-webkit-text-stroke:0.05px #cacace;">273</span>
<span class="a" style="right:120.70px;top:322.33px;font-size:5.95px;line-height:7.14px;color:#cacace;font-weight:normal;font-family:'Liberation Mono',monospace;transform:scale(1.000,1.150);transform-origin:right center;-webkit-text-stroke:0.05px #cacace;">209</span>
<span class="a" style="right:71.45px;top:322.33px;font-size:5.95px;line-height:7.14px;color:#cacace;font-weight:normal;font-family:'Liberation Mono',monospace;transform:scale(1.000,1.150);transform-origin:right center;-webkit-text-stroke:0.05px #cacace;">226</span>
<span class="a" style="right:22.20px;top:322.33px;font-size:5.95px;line-height:7.14px;color:#cacace;font-weight:normal;font-family:'Liberation Mono',monospace;transform:scale(1.000,1.150);transform-origin:right center;-webkit-text-stroke:0.05px #cacace;">272</span>
<span class="a" style="left:215.60px;top:337.04px;font-size:6.5px;line-height:7.80px;color:#c4c4c8;font-weight:normal;font-family:'Liberation Sans',sans-serif;transform:scale(0.907,1.000);transform-origin:left center;-webkit-text-stroke:0.05px #c4c4c8;">Landing Page [Total Events]</span>
<div class="a" style="left:304.8px;top:336.53999999999996px;width:8.2px;height:8.2px;background:#ff7557;border-radius:1.5px;"></div><svg class="a" style="left:306.80px;top:338.74px" width="4.5" height="4" viewBox="0 0 4.5 4"><path d="M0.4 2 L1.7 3.2 L4.1 0.7" stroke="#fff" stroke-width="0.8" fill="none"/></svg>
<span class="a" style="left:316.80px;top:337.04px;font-size:6.5px;line-height:7.80px;color:#d4d4d8;font-weight:normal;font-family:'Liberation Sans',sans-serif;transform:scale(0.955,1.000);transform-origin:left center;-webkit-text-stroke:0.1px #d4d4d8;">discount code</span>
<span class="a" style="right:367.80px;top:337.97px;font-size:5.95px;line-height:7.14px;color:#cacace;font-weight:normal;font-family:'Liberation Mono',monospace;transform:scale(1.000,1.150);transform-origin:right center;-webkit-text-stroke:0.05px #cacace;">244.2</span>
<span class="a" style="right:317.70px;top:337.97px;font-size:5.95px;line-height:7.14px;color:#cacace;font-weight:normal;font-family:'Liberation Mono',monospace;transform:scale(1.000,1.150);transform-origin:right center;-webkit-text-stroke:0.05px #cacace;">258</span>
<span class="a" style="right:268.45px;top:337.97px;font-size:5.95px;line-height:7.14px;color:#cacace;font-weight:normal;font-family:'Liberation Mono',monospace;transform:scale(1.000,1.150);transform-origin:right center;-webkit-text-stroke:0.05px #cacace;">241</span>
<span class="a" style="right:219.20px;top:337.97px;font-size:5.95px;line-height:7.14px;color:#cacace;font-weight:normal;font-family:'Liberation Mono',monospace;transform:scale(1.000,1.150);transform-origin:right center;-webkit-text-stroke:0.05px #cacace;">256</span>
<span class="a" style="right:169.95px;top:337.97px;font-size:5.95px;line-height:7.14px;color:#cacace;font-weight:normal;font-family:'Liberation Mono',monospace;transform:scale(1.000,1.150);transform-origin:right center;-webkit-text-stroke:0.05px #cacace;">242</span>
<span class="a" style="right:120.70px;top:337.97px;font-size:5.95px;line-height:7.14px;color:#cacace;font-weight:normal;font-family:'Liberation Mono',monospace;transform:scale(1.000,1.150);transform-origin:right center;-webkit-text-stroke:0.05px #cacace;">246</span>
<span class="a" style="right:71.45px;top:337.97px;font-size:5.95px;line-height:7.14px;color:#cacace;font-weight:normal;font-family:'Liberation Mono',monospace;transform:scale(1.000,1.150);transform-origin:right center;-webkit-text-stroke:0.05px #cacace;">269</span>
<span class="a" style="right:22.20px;top:337.97px;font-size:5.95px;line-height:7.14px;color:#cacace;font-weight:normal;font-family:'Liberation Mono',monospace;transform:scale(1.000,1.150);transform-origin:right center;-webkit-text-stroke:0.05px #cacace;">242</span>
<span class="a" style="left:215.60px;top:352.68px;font-size:6.5px;line-height:7.80px;color:#c4c4c8;font-weight:normal;font-family:'Liberation Sans',sans-serif;transform:scale(0.907,1.000);transform-origin:left center;-webkit-text-stroke:0.05px #c4c4c8;">Landing Page [Total Events]</span>
<div class="a" style="left:304.8px;top:352.17999999999995px;width:8.2px;height:8.2px;background:#80e1d9;border-radius:1.5px;"></div><svg class="a" style="left:306.80px;top:354.38px" width="4.5" height="4" viewBox="0 0 4.5 4"><path d="M0.4 2 L1.7 3.2 L4.1 0.7" stroke="#fff" stroke-width="0.8" fill="none"/></svg>
<span class="a" style="left:316.80px;top:352.68px;font-size:6.5px;line-height:7.80px;color:#d4d4d8;font-weight:normal;font-family:'Liberation Sans',sans-serif;transform:scale(0.960,1.000);transform-origin:left center;-webkit-text-stroke:0.1px #d4d4d8;">one for all</span>
<span class="a" style="right:367.80px;top:353.61px;font-size:5.95px;line-height:7.14px;color:#cacace;font-weight:normal;font-family:'Liberation Mono',monospace;transform:scale(1.000,1.150);transform-origin:right center;-webkit-text-stroke:0.05px #cacace;">243.6</span>
<span class="a" style="right:317.70px;top:353.61px;font-size:5.95px;line-height:7.14px;color:#cacace;font-weight:normal;font-family:'Liberation Mono',monospace;transform:scale(1.000,1.150);transform-origin:right center;-webkit-text-stroke:0.05px #cacace;">243</span>
<span class="a" style="right:268.45px;top:353.61px;font-size:5.95px;line-height:7.14px;color:#cacace;font-weight:normal;font-family:'Liberation Mono',monospace;transform:scale(1.000,1.150);transform-origin:right center;-webkit-text-stroke:0.05px #cacace;">248</span>
<span class="a" style="right:219.20px;top:353.61px;font-size:5.95px;line-height:7.14px;color:#cacace;font-weight:normal;font-family:'Liberation Mono',monospace;transform:scale(1.000,1.150);transform-origin:right center;-webkit-text-stroke:0.05px #cacace;">253</span>
<span class="a" style="right:169.95px;top:353.61px;font-size:5.95px;line-height:7.14px;color:#cacace;font-weight:normal;font-family:'Liberation Mono',monospace;transform:scale(1.000,1.150);transform-origin:right center;-webkit-text-stroke:0.05px #cacace;">222</span>
<span class="a" style="right:120.70px;top:353.61px;font-size:5.95px;line-height:7.14px;color:#cacace;font-weight:normal;font-family:'Liberation Mono',monospace;transform:scale(1.000,1.150);transform-origin:right center;-webkit-text-stroke:0.05px #cacace;">244</span>
<span class="a" style="right:71.45px;top:353.61px;font-size:5.95px;line-height:7.14px;color:#cacace;font-weight:normal;font-family:'Liberation Mono',monospace;transform:scale(1.000,1.150);transform-origin:right center;-webkit-text-stroke:0.05px #cacace;">261</span>
<span class="a" style="right:22.20px;top:353.61px;font-size:5.95px;line-height:7.14px;color:#cacace;font-weight:normal;font-family:'Liberation Mono',monospace;transform:scale(1.000,1.150);transform-origin:right center;-webkit-text-stroke:0.05px #cacace;">238</span>
<span class="a" style="left:215.60px;top:368.32px;font-size:6.5px;line-height:7.80px;color:#c4c4c8;font-weight:normal;font-family:'Liberation Sans',sans-serif;transform:scale(0.907,1.000);transform-origin:left center;-webkit-text-stroke:0.05px #c4c4c8;">Landing Page [Total Events]</span>
<div class="a" style="left:304.8px;top:367.82px;width:8.2px;height:8.2px;background:#f8bc3b;border-radius:1.5px;"></div><svg class="a" style="left:306.80px;top:370.02000000000004px" width="4.5" height="4" viewBox="0 0 4.5 4"><path d="M0.4 2 L1.7 3.2 L4.1 0.7" stroke="#fff" stroke-width="0.8" fill="none"/></svg>
<span class="a" style="left:316.80px;top:368.32px;font-size:6.5px;line-height:7.80px;color:#d4d4d8;font-weight:normal;font-family:'Liberation Sans',sans-serif;transform:scale(0.954,1.000);transform-origin:left center;-webkit-text-stroke:0.1px #d4d4d8;">look-alike</span>
<span class="a" style="right:367.80px;top:369.25px;font-size:5.95px;line-height:7.14px;color:#cacace;font-weight:normal;font-family:'Liberation Mono',monospace;transform:scale(1.000,1.150);transform-origin:right center;-webkit-text-stroke:0.05px #cacace;">243.1</span>
<span class="a" style="right:317.70px;top:369.25px;font-size:5.95px;line-height:7.14px;color:#cacace;font-weight:normal;font-family:'Liberation Mono',monospace;transform:scale(1.000,1.150);transform-origin:right center;-webkit-text-stroke:0.05px #cacace;">258</span>
<span class="a" style="right:268.45px;top:369.25px;font-size:5.95px;line-height:7.14px;color:#cacace;font-weight:normal;font-family:'Liberation Mono',monospace;transform:scale(1.000,1.150);transform-origin:right center;-webkit-text-stroke:0.05px #cacace;">236</span>
<span class="a" style="right:219.20px;top:369.25px;font-size:5.95px;line-height:7.14px;color:#cacace;font-weight:normal;font-family:'Liberation Mono',monospace;transform:scale(1.000,1.150);transform-origin:right center;-webkit-text-stroke:0.05px #cacace;">225</span>
<span class="a" style="right:169.95px;top:369.25px;font-size:5.95px;line-height:7.14px;color:#cacace;font-weight:normal;font-family:'Liberation Mono',monospace;transform:scale(1.000,1.150);transform-origin:right center;-webkit-text-stroke:0.05px #cacace;">263</span>
<span class="a" style="right:120.70px;top:369.25px;font-size:5.95px;line-height:7.14px;color:#cacace;font-weight:normal;font-family:'Liberation Mono',monospace;transform:scale(1.000,1.150);transform-origin:right center;-webkit-text-stroke:0.05px #cacace;">238</span>
<span class="a" style="right:71.45px;top:369.25px;font-size:5.95px;line-height:7.14px;color:#cacace;font-weight:normal;font-family:'Liberation Mono',monospace;transform:scale(1.000,1.150);transform-origin:right center;-webkit-text-stroke:0.05px #cacace;">231</span>
<span class="a" style="right:22.20px;top:369.25px;font-size:5.95px;line-height:7.14px;color:#cacace;font-weight:normal;font-family:'Liberation Mono',monospace;transform:scale(1.000,1.150);transform-origin:right center;-webkit-text-stroke:0.05px #cacace;">268</span>
<span class="a" style="left:215.60px;top:383.96px;font-size:6.5px;line-height:7.80px;color:#c4c4c8;font-weight:normal;font-family:'Liberation Sans',sans-serif;transform:scale(0.907,1.000);transform-origin:left center;-webkit-text-stroke:0.05px #c4c4c8;">Landing Page [Total Events]</span>
<div class="a" style="left:304.8px;top:383.46px;width:8.2px;height:8.2px;background:#b2596e;border-radius:1.5px;"></div><svg class="a" style="left:306.80px;top:385.66px" width="4.5" height="4" viewBox="0 0 4.5 4"><path d="M0.4 2 L1.7 3.2 L4.1 0.7" stroke="#fff" stroke-width="0.8" fill="none"/></svg>
<span class="a" style="left:316.80px;top:383.96px;font-size:6.5px;line-height:7.80px;color:#d4d4d8;font-weight:normal;font-family:'Liberation Sans',sans-serif;transform:scale(0.942,1.000);transform-origin:left center;-webkit-text-stroke:0.1px #d4d4d8;">all for one</span>
<span class="a" style="right:367.80px;top:384.89px;font-size:5.95px;line-height:7.14px;color:#cacace;font-weight:normal;font-family:'Liberation Mono',monospace;transform:scale(1.000,1.150);transform-origin:right center;-webkit-text-stroke:0.05px #cacace;">242.1</span>
<span class="a" style="right:317.70px;top:384.89px;font-size:5.95px;line-height:7.14px;color:#cacace;font-weight:normal;font-family:'Liberation Mono',monospace;transform:scale(1.000,1.150);transform-origin:right center;-webkit-text-stroke:0.05px #cacace;">221</span>
<span class="a" style="right:268.45px;top:384.89px;font-size:5.95px;line-height:7.14px;color:#cacace;font-weight:normal;font-family:'Liberation Mono',monospace;transform:scale(1.000,1.150);transform-origin:right center;-webkit-text-stroke:0.05px #cacace;">210</span>
<span class="a" style="right:219.20px;top:384.89px;font-size:5.95px;line-height:7.14px;color:#cacace;font-weight:normal;font-family:'Liberation Mono',monospace;transform:scale(1.000,1.150);transform-origin:right center;-webkit-text-stroke:0.05px #cacace;">276</span>
<span class="a" style="right:169.95px;top:384.89px;font-size:5.95px;line-height:7.14px;color:#cacace;font-weight:normal;font-family:'Liberation Mono',monospace;transform:scale(1.000,1.150);transform-origin:right center;-webkit-text-stroke:0.05px #cacace;">237</span>
<span class="a" style="right:120.70px;top:384.89px;font-size:5.95px;line-height:7.14px;color:#cacace;font-weight:normal;font-family:'Liberation Mono',monospace;transform:scale(1.000,1.150);transform-origin:right center;-webkit-text-stroke:0.05px #cacace;">247</span>
<span class="a" style="right:71.45px;top:384.89px;font-size:5.95px;line-height:7.14px;color:#cacace;font-weight:normal;font-family:'Liberation Mono',monospace;transform:scale(1.000,1.150);transform-origin:right center;-webkit-text-stroke:0.05px #cacace;">255</span>
<span class="a" style="right:22.20px;top:384.89px;font-size:5.95px;line-height:7.14px;color:#cacace;font-weight:normal;font-family:'Liberation Mono',monospace;transform:scale(1.000,1.150);transform-origin:right center;-webkit-text-stroke:0.05px #cacace;">199</span>
<span class="a" style="left:215.60px;top:399.60px;font-size:6.5px;line-height:7.80px;color:#c4c4c8;font-weight:normal;font-family:'Liberation Sans',sans-serif;transform:scale(0.907,1.000);transform-origin:left center;-webkit-text-stroke:0.05px #c4c4c8;">Landing Page [Total Events]</span>
<div class="a" style="left:304.8px;top:399.09999999999997px;width:8.2px;height:8.2px;background:#72bef4;border-radius:1.5px;"></div><svg class="a" style="left:306.80px;top:401.3px" width="4.5" height="4" viewBox="0 0 4.5 4"><path d="M0.4 2 L1.7 3.2 L4.1 0.7" stroke="#fff" stroke-width="0.8" fill="none"/></svg>
<span class="a" style="left:316.80px;top:399.60px;font-size:6.5px;line-height:7.80px;color:#d4d4d8;font-weight:normal;font-family:'Liberation Sans',sans-serif;transform:scale(0.930,1.000);transform-origin:left center;-webkit-text-stroke:0.1px #d4d4d8;">$organic</span>
<span class="a" style="right:367.80px;top:400.53px;font-size:5.95px;line-height:7.14px;color:#cacace;font-weight:normal;font-family:'Liberation Mono',monospace;transform:scale(1.000,1.150);transform-origin:right center;-webkit-text-stroke:0.05px #cacace;">110.9</span>
<span class="a" style="right:317.70px;top:400.53px;font-size:5.95px;line-height:7.14px;color:#cacace;font-weight:normal;font-family:'Liberation Mono',monospace;transform:scale(1.000,1.150);transform-origin:right center;-webkit-text-stroke:0.05px #cacace;">129</span>
<span class="a" style="right:268.45px;top:400.53px;font-size:5.95px;line-height:7.14px;color:#cacace;font-weight:normal;font-family:'Liberation Mono',monospace;transform:scale(1.000,1.150);transform-origin:right center;-webkit-text-stroke:0.05px #cacace;">113</span>
<span class="a" style="right:219.20px;top:400.53px;font-size:5.95px;line-height:7.14px;color:#cacace;font-weight:normal;font-family:'Liberation Mono',monospace;transform:scale(1.000,1.150);transform-origin:right center;-webkit-text-stroke:0.05px #cacace;">103</span>
<span class="a" style="right:169.95px;top:400.53px;font-size:5.95px;line-height:7.14px;color:#cacace;font-weight:normal;font-family:'Liberation Mono',monospace;transform:scale(1.000,1.150);transform-origin:right center;-webkit-text-stroke:0.05px #cacace;">113</span>
<span class="a" style="right:120.70px;top:400.53px;font-size:5.95px;line-height:7.14px;color:#cacace;font-weight:normal;font-family:'Liberation Mono',monospace;transform:scale(1.000,1.150);transform-origin:right center;-webkit-text-stroke:0.05px #cacace;">136</span>
<span class="a" style="right:71.45px;top:400.53px;font-size:5.95px;line-height:7.14px;color:#cacace;font-weight:normal;font-family:'Liberation Mono',monospace;transform:scale(1.000,1.150);transform-origin:right center;-webkit-text-stroke:0.05px #cacace;">95</span>
<span class="a" style="right:22.20px;top:400.53px;font-size:5.95px;line-height:7.14px;color:#cacace;font-weight:normal;font-family:'Liberation Mono',monospace;transform:scale(1.000,1.150);transform-origin:right center;-webkit-text-stroke:0.05px #cacace;">126</span>
<div class="a" style="left:211px;top:428.6px;width:201px;height:1.6px;background:#4a4b4f;border-radius:0.8px;"></div>
</body></html>
